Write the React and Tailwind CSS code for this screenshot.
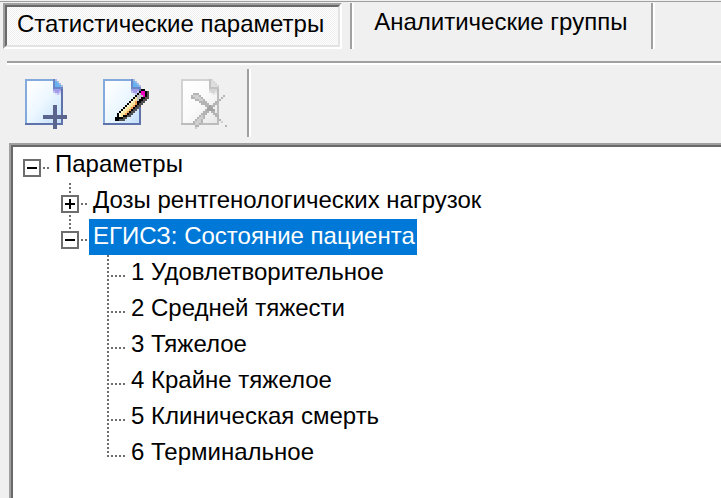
const tree = {
  label: 'Параметры',
  children: [
    { label: 'Дозы рентгенологических нагрузок', closed: true },
    {
      label: 'ЕГИСЗ: Состояние пациента',
      selected: true,
      children: [
        { label: '1 Удовлетворительное' },
        { label: '2 Средней тяжести' },
        { label: '3 Тяжелое' },
        { label: '4 Крайне тяжелое' },
        { label: '5 Клиническая смерть' },
        { label: '6 Терминальное' },
      ],
    },
  ],
};

// Runs of icon pixels: [row, first column, one palette letter per pixel]
function Pixels({ rows, palette }) {
  return rows.map(([y, x, run]) =>
    [...run].map((c, i) => <rect key={`${x + i}-${y}`} x={x + i} y={y} width="1" height="1" fill={palette[c]} />)
  );
}

const foldRows = [
  [0, 14, 'ek'],
  [1, 14, 'ebk'],
  [2, 14, 'ebbk'],
  [3, 14, 'ebbbk'],
  [4, 14, 'eeeee'],
  [5, 14, 'pppp'],
  [6, 14, 'qppq'],
  [7, 15, 'rqr'],
];

const blueFold = { e: '#6a86c4', k: '#a9bcdf', b: '#68b2f2', p: '#a39ce8', q: '#c3c2f7', r: '#dcdefb' };
const grayFold = { e: '#c2c2c2', k: '#d6d6d6', b: '#dedede', p: '#d4d4d4', q: '#e4e4e4', r: '#f0f0f0' };

const pencilRows = [
  [5, 19, '##'],
  [6, 18, '#mm#s'],
  [7, 17, '#gmm#s'],
  [8, 16, '#gggm#s'],
  [9, 15, '#ygg##ss'],
  [10, 14, '#wyg##ss'],
  [11, 13, '#wyo##ss'],
  [12, 12, '#wyyo#ss'],
  [13, 11, '#wyyo#ss'],
  [14, 10, '#wyyo#ss'],
  [15, 9, '#wyyo#ss'],
  [16, 8, '#wyyo#ss'],
  [17, 7, '#wyyo#ss'],
  [18, 7, '#wy##ss'],
  [19, 6, '####ss'],
  [20, 6, '##sss'],
];

const pencilPalette = { '#': '#000000', m: '#f000c0', g: '#c0c0c0', w: '#fff8d0', y: '#f6e29a', o: '#f09850', s: '#505050' };

const crossRows = [
  [7, 6, 'aaa'],
  [8, 5, 'allla'],
  [8, 21, 'a'],
  [9, 5, 'aallla'],
  [9, 20, 'a'],
  [10, 7, 'aalla'],
  [10, 19, 'a'],
  [11, 9, 'aaaa'],
  [11, 17, 'aa'],
  [12, 10, 'aaaa'],
  [12, 16, 'aa'],
  [13, 12, 'aadaa'],
  [14, 13, 'ddd'],
  [15, 12, 'adddd'],
  [16, 11, 'aaa'],
  [16, 15, 'aa'],
  [17, 10, 'aaa'],
  [17, 16, 'aa'],
  [18, 9, 'ala'],
  [18, 17, 'aa'],
  [19, 8, 'alla'],
  [19, 18, 'a'],
  [20, 7, 'alla'],
  [20, 19, 'a'],
  [21, 6, 'allla'],
  [21, 20, 'l'],
  [22, 6, 'alla'],
  [23, 7, 'aa'],
  [23, 22, 'a'],
  [24, 7, 'l'],
];

const crossPalette = { a: '#b4b4b4', l: '#cfcfcf', d: '#a2a2a2' };

// Sheet with a folded corner, drawn on a 19x23 pixel grid
function Sheet({ id, left, right, from, to, fold }) {
  return (
    <>
      <defs>
        <linearGradient id={id} x1="0" y1="0" x2="1" y2="1">
          <stop offset="0.1" stopColor="#ffffff" />
          <stop offset="0.5" stopColor={from} />
          <stop offset="1" stopColor={to} />
        </linearGradient>
      </defs>
      <path d="M0 0h15v5h4v18H0z" fill={`url(#${id})`} />
      <path d="M0 0h15v1H0zM0 0h1v22H0z" fill={left} />
      <path d="M0 22h19v1H0zM18 4h1v19h-1z" fill={right} />
      <Pixels rows={foldRows} palette={fold} />
    </>
  );
}

function NewIcon() {
  return (
    <svg width="44" height="52" viewBox="0 0 22 26" shapeRendering="crispEdges">
      <Sheet id="new" left="#84a9dc" right="#6072aa" from="#ecf7ff" to="#bfdcfa" fold={blueFold} />
      <path d="M14 13h2v5h5v2h-5v5h-2v-5H9v-2h5z" fill="#5a648c" />
    </svg>
  );
}

function EditIcon() {
  return (
    <svg width="48" height="52" viewBox="0 0 24 26" shapeRendering="crispEdges">
      <Sheet id="edit" left="#84a9dc" right="#6072aa" from="#ecf7ff" to="#bfdcfa" fold={blueFold} />
      <Pixels rows={pencilRows} palette={pencilPalette} />
    </svg>
  );
}

function DeleteIcon() {
  return (
    <svg width="48" height="52" viewBox="0 0 24 26" shapeRendering="crispEdges">
      <Sheet id="delete" left="#d2d2d2" right="#bcbcbc" from="#fafafa" to="#e6e6e6" fold={grayFold} />
      <Pixels rows={crossRows} palette={crossPalette} />
    </svg>
  );
}

const tools = [
  { name: 'Добавить', Icon: NewIcon },
  { name: 'Изменить', Icon: EditIcon },
  { name: 'Удалить', Icon: DeleteIcon, disabled: true },
];

const dotsX = 'h-[2px] bg-[repeating-linear-gradient(to_right,#6d6d6d_0_2px,transparent_2px_4px)]';
const dotsY = 'w-[2px] bg-[repeating-linear-gradient(to_bottom,#6d6d6d_0_2px,transparent_2px_4px)]';

function Toggle({ closed, label }) {
  return (
    <button aria-label={label} aria-expanded={!closed} className="flex size-[18px] shrink-0 items-center justify-center border-2 border-[#6d6d6d] bg-white">
      <svg width="10" height="10" shapeRendering="crispEdges">
        <path d={closed ? 'M0 4h10v2H0zM4 0h2v10H4z' : 'M0 4h10v2H0z'} />
      </svg>
    </button>
  );
}

function Label({ node }) {
  return (
    <span className={`flex h-9 items-center pr-[2px] pb-[2px] pl-1 whitespace-nowrap ${node.selected ? 'bg-[#0078d7] text-white' : ''}`}>
      {node.label}
    </span>
  );
}

function Leaf({ node, last }) {
  return (
    <li role="treeitem" className="flex h-9">
      <div className={`${dotsY} ${last ? 'h-[22px]' : 'h-9'}`} />
      <div className={`${dotsX} mx-[2px] mt-5 w-[14px]`} />
      <Label node={node} />
    </li>
  );
}

function Branch({ node }) {
  return (
    <li role="treeitem" aria-expanded={!node.closed} aria-selected={!!node.selected}>
      <div className="flex h-9">
        <div className="mt-3 flex h-[18px] items-center">
          <Toggle closed={node.closed} label={node.label} />
          <div className={`${dotsX} mx-[2px] w-[6px]`} />
        </div>
        <Label node={node} />
      </div>
      {node.children && (
        <ul role="group" className={node.selected ? 'pl-[46px]' : 'pl-[38px]'}>
          {node.children.map((child, i) =>
            child.children || child.closed ? (
              <div key={child.label} className="relative">
                <div className={`${dotsY} absolute left-2 ${i > 0 ? '-top-1 h-4' : 'top-0 h-3'}`} />
                <Branch node={child} />
              </div>
            ) : (
              <Leaf key={child.label} node={child} last={i === node.children.length - 1} />
            )
          )}
        </ul>
      )}
    </li>
  );
}

export default function App() {
  return (
    <div className="flex h-screen flex-col overflow-hidden bg-[#f0f0f0] font-['Liberation_Sans',Arial,sans-serif] text-2xl leading-7 text-black">
      <div className="mt-px border-t border-[#a0a0a0]" />
      <div role="tablist" className="mt-px flex h-[46px] shrink-0 pl-[3px]">
        <button role="tab" aria-selected="true" className="border-2 border-t-[#a0a0a0] border-r-white border-b-white border-l-[#a0a0a0]">
          <span className="flex h-full items-center border-2 border-t-[#696969] border-r-[#e3e3e3] border-b-[#e3e3e3] border-l-[#696969] bg-[repeating-conic-gradient(#ffffff_0_25%,#f0f0f0_0_50%)] bg-[length:2px_2px] pr-[14px] pb-1 pl-[10px] whitespace-nowrap">
            Статистические параметры
          </span>
        </button>
        <div className="ml-2 w-1 border-l-2 border-[#a0a0a0] bg-white" />
        <button role="tab" aria-selected="false" className="pr-6 pb-2 pl-5 whitespace-nowrap">
          Аналитические группы
        </button>
        <div className="w-1 border-l-2 border-[#a0a0a0] bg-white" />
      </div>
      <div className="mt-3 ml-[7px] h-1 shrink-0 border-t-2 border-[#a0a0a0] bg-white" />
      <div role="toolbar" className="mt-1 flex h-[68px] shrink-0 pl-[25px]">
        {tools.map(({ name, Icon, disabled }) => (
          <button key={name} aria-label={name} disabled={disabled} className="flex w-[78px] items-start pt-[10px]">
            <Icon />
          </button>
        ))}
        <div className="-ml-3 w-1 border-l-2 border-[#a0a0a0] bg-white" />
      </div>
      <div className="mt-[6px] ml-[9px] grow border-t-2 border-l-2 border-[#a0a0a0]">
        <ul role="tree" className="h-full border-t-2 border-l-2 border-[#696969] bg-white pl-[10px]">
          <Branch node={tree} />
        </ul>
      </div>
    </div>
  );
}
